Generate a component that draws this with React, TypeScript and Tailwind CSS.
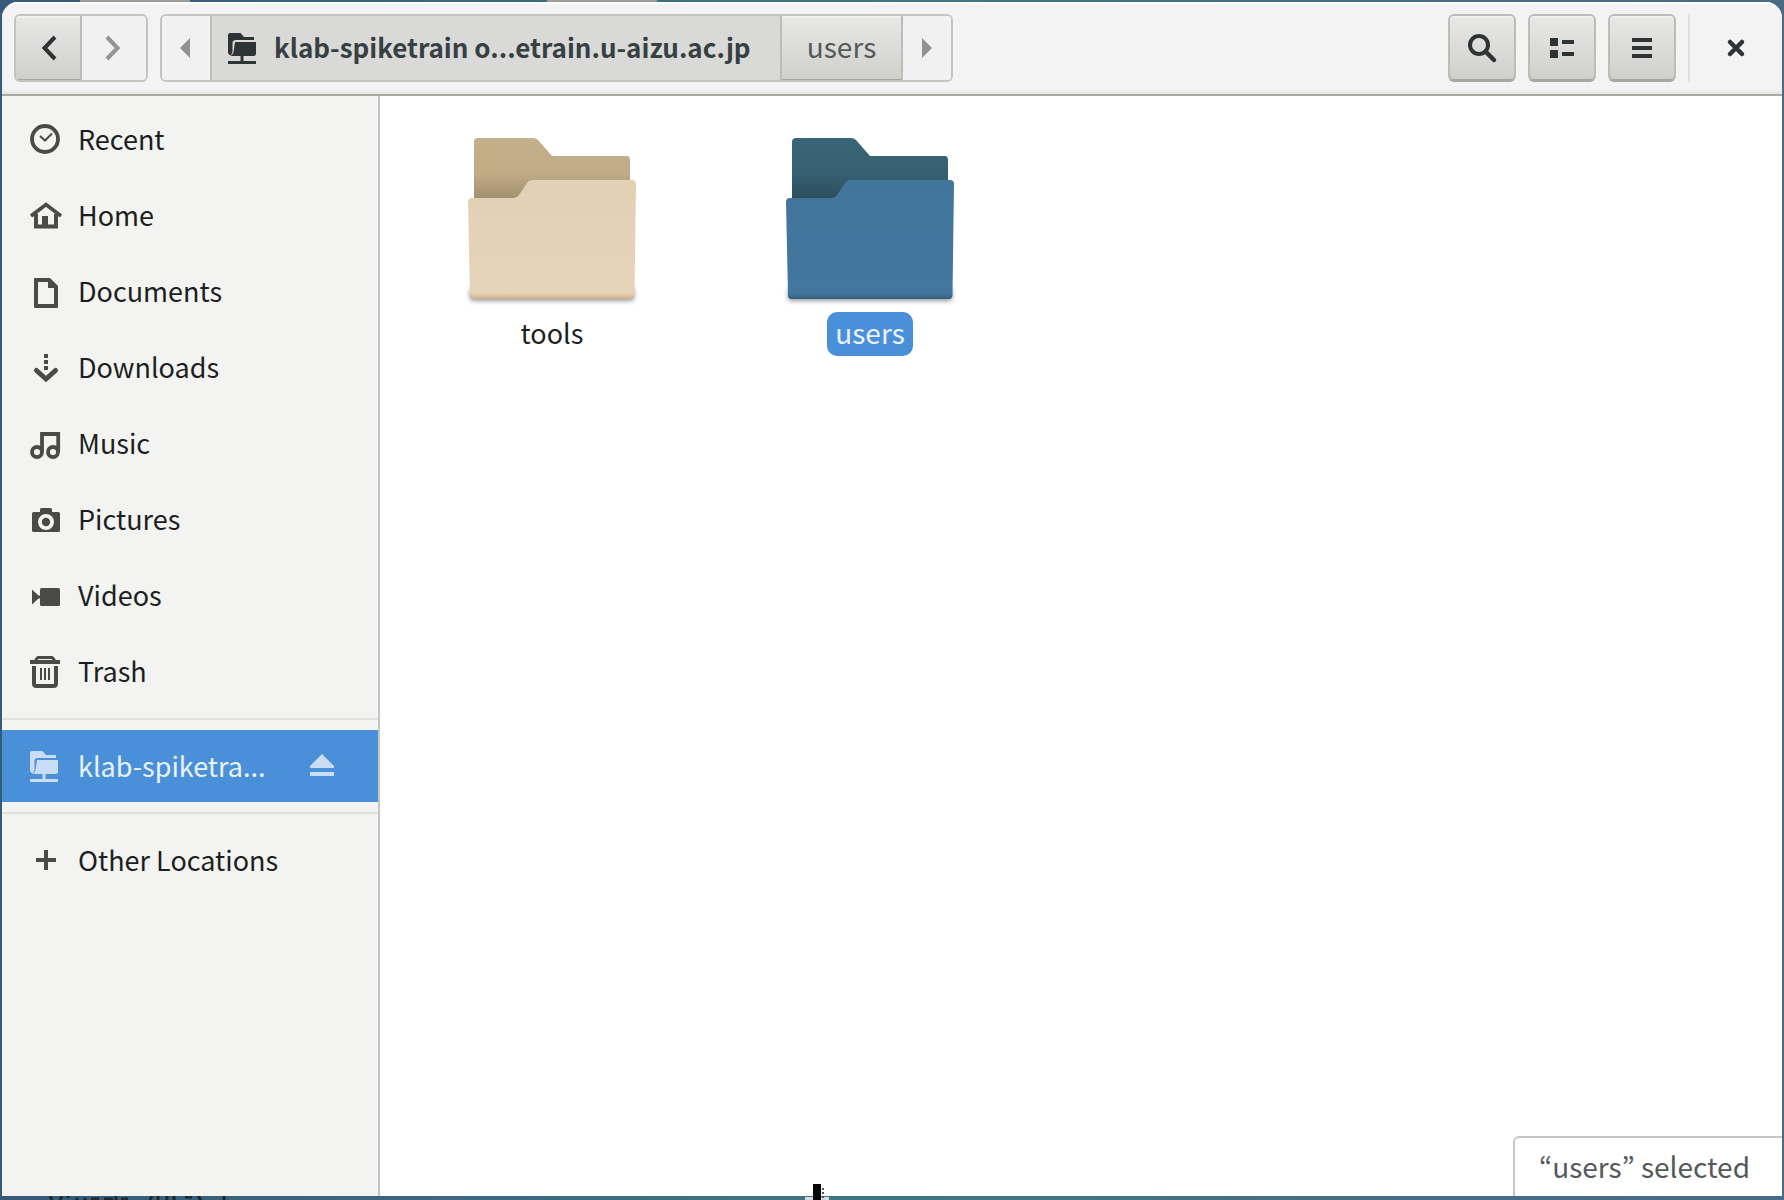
import type { ReactNode } from "react";

const INK = "#2e3436";

function Icon({ children, className = "" }: { children: ReactNode; className?: string }) {
  return (
    <svg viewBox="0 0 32 32" className={`size-8 shrink-0 overflow-visible ${className}`} fill="currentColor" aria-hidden="true">
      {children}
    </svg>
  );
}

function RemoteFolder() {
  return (
    <>
      <path d="M0 3Q0 1 2 1H12.500L16 5H26V8H8Q4.500 8 4.500 11V20L3 23.500Q0 22.500 0 20Z" />
      <path d="M7 10H28V21.500Q28 24 25.500 24H5Q3.500 24 3 23.500Q5 22.500 5.500 20Z" />
      <path d="M12.500 24H15.500V29H28V32H0V29H12.500Z" />
    </>
  );
}

const places: { name: string; icon: ReactNode }[] = [
  {
    name: "Recent",
    icon: (
      <>
        <circle cx="15" cy="16" r="13" fill="none" stroke="currentColor" strokeWidth="3.800" />
        <path d="M10 13L15 17.500L22 10.500" fill="none" stroke="currentColor" strokeWidth="2" />
      </>
    ),
  },
  {
    name: "Home",
    icon: (
      <g fill="none" stroke="currentColor" strokeWidth="4">
        <path d="M1 17L16 5.500L31 17" strokeWidth="3.600" />
        <path d="M6 15V27.500H26V15" />
        <path d="M15 27V17" strokeWidth="6" />
      </g>
    ),
  },
  {
    name: "Documents",
    icon: (
      <path fillRule="evenodd" d="M5 3H20L28 11V32Q28 33 27 33H5Q4 33 4 32V4Q4 3 5 3ZM8 7V29H24V13H18V7Z" />
    ),
  },
  {
    name: "Downloads",
    icon: (
      <>
        <path d="M14 3H18V7H14ZM14 9H18V13H14ZM14 15H18V19H14Z" />
        <path d="M6.500 19.500L16 28L25.500 19.500" fill="none" stroke="currentColor" strokeWidth="5" strokeLinecap="round" />
      </>
    ),
  },
  {
    name: "Music",
    icon: (
      <g fill="none" stroke="currentColor" strokeWidth="3.800">
        <circle cx="7" cy="25" r="5" />
        <circle cx="23" cy="25" r="5" />
        <path d="M12 25V7H28.200V25" />
      </g>
    ),
  },
  {
    name: "Pictures",
    icon: (
      <>
        <path
          fillRule="evenodd"
          d="M10 6.500Q10 5 11.500 5H20.500Q22 5 22 6.500V9H28.500Q30 9 30 10.500V27.500Q30 29 28.500 29H3.500Q2 29 2 27.500V10.500Q2 9 3.500 9H10ZM16 11A8 8 0 1 0 16 27A8 8 0 1 0 16 11Z"
        />
        <circle cx="16" cy="19" r="4.200" />
      </>
    ),
  },
  {
    name: "Videos",
    icon: (
      <>
        <rect x="10" y="9" width="20" height="18" rx="1.500" />
        <path d="M2 10.500L8.500 16.500H11V19.500H8.500L2 25.500Z" />
      </>
    ),
  },
  {
    name: "Trash",
    icon: (
      <>
        <path d="M0 5H30V9H0Z" />
        <path d="M6 6V4.500L8 2.500H22L24 4.500V6" fill="none" stroke="currentColor" strokeWidth="3" />
        <path d="M4 11V28.500Q4 31 6.500 31H23.500Q26 31 26 28.500V11" fill="none" stroke="currentColor" strokeWidth="4" />
        <path d="M10 13H12V25H10ZM14 13H16V25H14ZM18 13H20V25H18Z" />
      </>
    ),
  },
];

function PlaceRow({ name, icon }: { name: string; icon: ReactNode }) {
  return (
    <li>
      <button type="button" className="flex h-[72px] w-full items-center gap-4 pl-7 text-left text-[#1c1f20]">
        <Icon className="text-[#4a4a47]">{icon}</Icon>
        <span>{name}</span>
      </button>
    </li>
  );
}

type FolderTone = { id: string; backTop: string; back: string; backLow: string; front: string; frontLow: string; edge: string };

const tan: FolderTone = { id: "tan", backTop: "#c4b18c", back: "#bfac87", backLow: "#a3906c", front: "#e2d0b5", frontLow: "#e5d4ba", edge: "#cfae85" };
const blue: FolderTone = { id: "blue", backTop: "#386577", back: "#366172", backLow: "#2c4d5b", front: "#42759c", frontLow: "#43779f", edge: "#315f7e" };

function Folder({ tone }: { tone: FolderTone }) {
  return (
    <svg viewBox="0 0 192 192" className="size-48" aria-hidden="true">
      <defs>
        <linearGradient id={`${tone.id}-back`} x1="0" y1="10" x2="0" y2="70" gradientUnits="userSpaceOnUse">
          <stop offset="0" stopColor={tone.backTop} />
          <stop offset="0.600" stopColor={tone.back} />
          <stop offset="1" stopColor={tone.backLow} />
        </linearGradient>
        <linearGradient id={`${tone.id}-front`} x1="0" y1="50" x2="0" y2="171" gradientUnits="userSpaceOnUse">
          <stop offset="0" stopColor={tone.front} />
          <stop offset="0.950" stopColor={tone.frontLow} />
          <stop offset="1" stopColor={tone.edge} />
        </linearGradient>
        <filter id={`${tone.id}-blur`} x="-10%" y="-10%" width="120%" height="140%">
          <feGaussianBlur stdDeviation="2.500" />
        </filter>
      </defs>
      <rect x="14" y="160" width="164" height="13" rx="3" fill="#000" opacity="0.400" filter={`url(#${tone.id}-blur)`} />
      <path d="M18 14Q18 10 22 10H77Q80 10 82 12L96 28H171Q174 28 174 32V80H18Z" fill={`url(#${tone.id}-back)`} />
      <path
        d="M16 70H58Q61 70 63 67L71 55Q73 52 77 52H176Q180 52 180 56L178.500 167Q178.500 171 175 171H17Q14 171 14 167L12 74Q12 70 16 70Z"
        fill={`url(#${tone.id}-front)`}
      />
    </svg>
  );
}

const raised = "bg-linear-to-b from-[#e8e8e6] to-[#cfcfcc] shadow-[inset_0_2px_#f1f1f0,inset_0_-1px_#a5a5a0]";

function ToolButton({ label, children }: { label: string; children: ReactNode }) {
  return (
    <button
      type="button"
      aria-label={label}
      className={`flex size-[68px] items-center justify-center rounded-md border-2 border-[#bdbdb8] border-b-[#a8a8a2] text-[#2e3436] ${raised}`}
    >
      {children}
    </button>
  );
}

export default function App() {
  return (
    <div className='relative flex min-h-screen flex-col overflow-hidden bg-linear-to-r from-[#365a78] via-[#407683] to-[#486a85] px-[2px] pt-[2px] pb-1 font-["Noto_Sans_CJK_JP","Noto_Sans",sans-serif] text-[27px] leading-9'>
      <div aria-hidden="true" className="absolute top-0 left-20 h-[2px] w-[110px] bg-[#9c9c9b]" />
      <div aria-hidden="true" className="absolute top-0 left-[547px] h-[2px] w-[110px] bg-[#9c9c9b]" />

      <div className="flex grow flex-col overflow-hidden rounded-t-2xl bg-white">
        <header className="flex h-[94px] shrink-0 items-start border-b-2 border-[#a9a9a3] bg-[#f3f3f3] px-3 pt-3 shadow-[inset_0_2px_#ffffff,inset_0_-3px_3px_#e6e6e4]">
          <nav aria-label="History" className="flex h-[68px] overflow-hidden rounded-md border-2 border-[#c4c4bf]">
            <button type="button" aria-label="Back" className={`flex w-[66px] items-center justify-center border-r-2 border-[#bdbdb8] text-[#2e3436] ${raised}`}>
              <Icon>
                <path d="M23 5L12.500 16L23 27" fill="none" stroke="currentColor" strokeWidth="4" />
              </Icon>
            </button>
            <button type="button" aria-label="Forward" className="flex w-16 items-center justify-center bg-[#f1f1f1] text-[#929595]">
              <Icon>
                <path d="M9 5L19.500 16L9 27" fill="none" stroke="currentColor" strokeWidth="4" />
              </Icon>
            </button>
          </nav>

          <nav aria-label="Path" className="ml-3 flex h-[68px] overflow-hidden rounded-md border-2 border-[#c4c4bf]">
            <button type="button" aria-label="Scroll path left" className="flex w-[50px] items-center justify-center border-r-2 border-[#c0c0bb] bg-[#f1f1f1] text-[#8f9292]">
              <Icon>
                <path d="M20 6V26L10 16Z" />
              </Icon>
            </button>
            <button type="button" className="flex w-[568px] items-center gap-[14px] bg-[#d9d9d7] pl-4 font-bold text-[#364043]">
              <Icon className="text-[#2e3436]">
                <RemoteFolder />
              </Icon>
              <span className="pb-[2px] text-[26px] whitespace-nowrap">klab-spiketrain o...etrain.u-aizu.ac.jp</span>
            </button>
            <button type="button" className={`w-[123px] border-x-2 border-[#bdbdb8] pb-1 text-[28px] text-[#55595a] ${raised}`}>
              users
            </button>
            <button type="button" aria-label="Scroll path right" className="flex w-12 items-center justify-center bg-[#f1f1f1] text-[#8f9292]">
              <Icon>
                <path d="M11 6V26L21 16Z" />
              </Icon>
            </button>
          </nav>

          <div className="ml-auto flex items-start gap-3">
            <ToolButton label="Search">
              <Icon>
                <circle cx="13" cy="13" r="9" fill="none" stroke={INK} strokeWidth="4" />
                <path d="M19.500 19.500L28 28" stroke={INK} strokeWidth="4.500" strokeLinecap="round" />
              </Icon>
            </ToolButton>
            <ToolButton label="List view">
              <Icon>
                <path d="M4 6H12V14H4ZM4 18H12V26H4ZM16 8H28V12H16ZM16 20H28V24H16Z" />
              </Icon>
            </ToolButton>
            <ToolButton label="Menu">
              <Icon>
                <path d="M6 6H26V10H6ZM6 14H26V18H6ZM6 22H26V26H6Z" />
              </Icon>
            </ToolButton>
            <div className="h-[68px] w-[2px] bg-[#dfdfdd]" />
            <button type="button" aria-label="Close" className="flex size-[68px] items-center justify-center text-[#2e3436]">
              <Icon>
                <path d="M10 10L22 22M22 10L10 22" stroke="currentColor" strokeWidth="4.500" strokeLinecap="round" />
              </Icon>
            </button>
          </div>
        </header>

        <div className="flex grow">
          <aside className="w-[378px] shrink-0 border-r-2 border-[#c4c4c2] bg-[#f3f3f2]">
            <ul className="flex flex-col gap-1 pt-[7px] pb-[11px]">
              {places.map((p) => (
                <PlaceRow key={p.name} {...p} />
              ))}
            </ul>
            <div className="border-y-2 border-[#e0e0de] py-[10px]">
              <div className="flex h-[72px] items-center bg-[#4a90d9]">
                <button type="button" className="flex min-w-0 grow items-center gap-4 pl-7 text-left text-[#eaf2fb]">
                  <Icon className="text-[#c9def4]">
                    <RemoteFolder />
                  </Icon>
                  <span>klab-spiketra...</span>
                </button>
                <button type="button" aria-label="Eject" className="mr-10 text-[#c9def4]">
                  <Icon>
                    <path d="M16 4L28 16V18H4V16ZM4 22H28V26H4Z" />
                  </Icon>
                </button>
              </div>
            </div>
            <ul className="pt-[10px]">
              <PlaceRow
                name="Other Locations"
                icon={<path d="M14 6H18V14H26V18H18V26H14V18H6V14H14Z" />}
              />
            </ul>
          </aside>

          <main className="flex min-w-0 grow flex-col justify-between">
            <div className="flex gap-[126px] pt-8 pl-[76px]">
              <button type="button" className="flex w-48 flex-col items-center text-[#1c1f20]">
                <Folder tone={tan} />
                <span className="-mt-2 flex h-11 items-center rounded-[10px] px-2 pb-[2px]">tools</span>
              </button>
              <button type="button" className="flex w-48 flex-col items-center text-[28px] text-[#eaf2fb]">
                <Folder tone={blue} />
                <span className="-mt-2 flex h-11 items-center rounded-[10px] bg-[#4a90d9] px-2 pb-1">users</span>
              </button>
            </div>
            <p className="flex h-[60px] items-center self-end rounded-tl-md border-t-2 border-l-2 border-[#c6c6c4] pr-8 pb-[3px] pl-6 text-[28px] text-[#54595b]">
              “users” selected
            </p>
          </main>
        </div>
      </div>

      <svg viewBox="0 0 32 16" className="absolute bottom-0 left-[801px] h-4 w-8" aria-hidden="true">
        <path d="M4 13H28V16H4Z" fill="#d5dede" />
        <path d="M12 0H20V16H12Z" fill="#060808" />
        <path d="M21 4H23V6H21ZM21 8H23V10H21ZM21 12H23V14H21Z" fill="#555" />
      </svg>
      <svg viewBox="0 0 180 4" className="absolute bottom-0 left-12 h-1 w-[180px]" fill="none" stroke="#1d2933" strokeWidth="3" aria-hidden="true">
        <path d="M2 0L4 4M14 0L12 4M20 0V2M28 2L30 4M38 2L36 4M43 3H51M56 3H65M68 0V4M73 3H80M104 0L102 4M110 0V4M119 0V4M126 0V4M137 1H144M150 0L153 4M176 0V4" />
      </svg>
    </div>
  );
}
